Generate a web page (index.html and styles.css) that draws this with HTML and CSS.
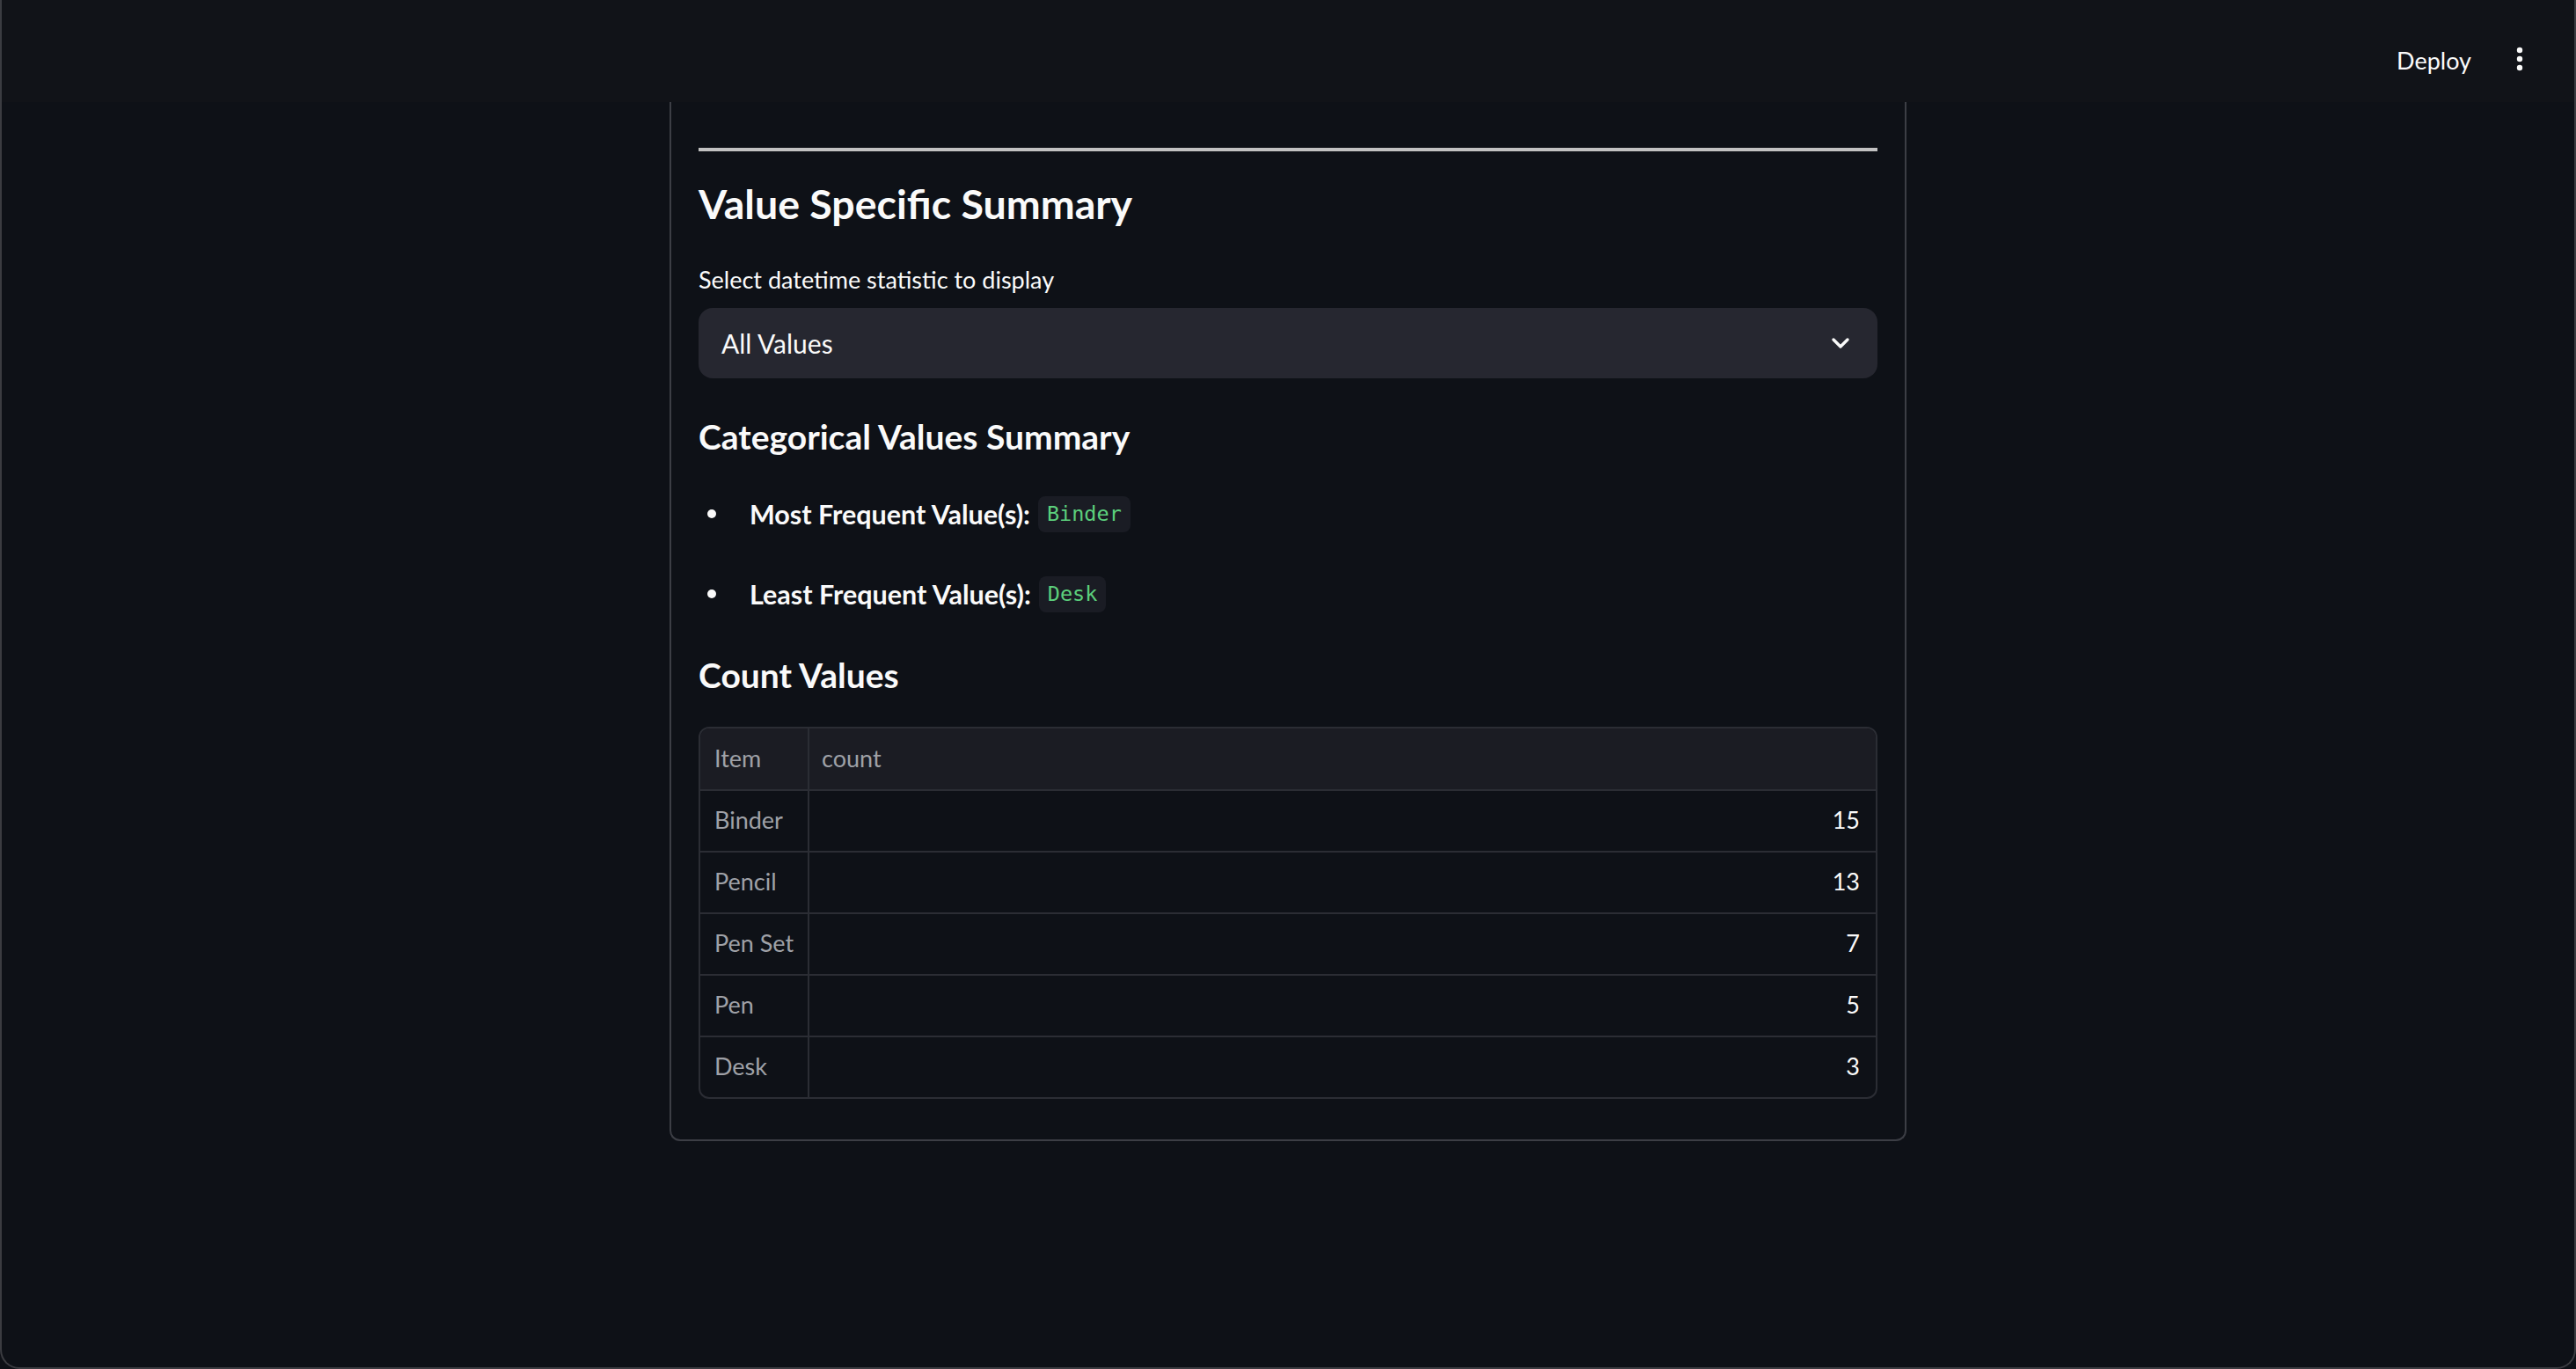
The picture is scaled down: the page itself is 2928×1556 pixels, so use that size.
FILE: index.html
```html
<!DOCTYPE html>
<html lang="en">
<head>
<meta charset="utf-8">
<title>Value Specific Summary</title>
<link rel="stylesheet" href="styles.css">
</head>
<body>
<div class="window">
  <header class="topbar">
    <span class="deploy">Deploy</span>
    <span class="kebab" aria-label="menu">
      <svg width="10" height="30" viewBox="0 0 10 30"><circle cx="5" cy="4" r="3.2" fill="#fafafa"/><circle cx="5" cy="14" r="3.2" fill="#fafafa"/><circle cx="5" cy="24" r="3.2" fill="#fafafa"/></svg>
    </span>
  </header>
  <main class="main">
    <section class="card">
      <div class="rule"></div>
      <h3 class="title">Value Specific Summary</h3>
      <div class="label">Select datetime statistic to display</div>
      <div class="select">
        <span class="select-value">All Values</span>
        <svg class="chevron" width="22" height="14" viewBox="0 0 22 14"><path d="M3 3 L11 11 L19 3" fill="none" stroke="#fafafa" stroke-width="3.4" stroke-linecap="round" stroke-linejoin="round"/></svg>
      </div>
      <h4 class="subtitle sub-cat">Categorical Values Summary</h4>
      <ul class="bullets">
        <li class="bullet"><span class="dot"></span><strong>Most Frequent Value(s):</strong><code class="chip">Binder</code></li>
        <li class="bullet"><span class="dot"></span><strong>Least Frequent Value(s):</strong><code class="chip">Desk</code></li>
      </ul>
      <h4 class="subtitle sub-count">Count Values</h4>
      <div class="table">
        <div class="row head"><div class="cell idx">Item</div><div class="cell val-head">count</div></div>
        <div class="row"><div class="cell idx">Binder</div><div class="cell num">15</div></div>
        <div class="row"><div class="cell idx">Pencil</div><div class="cell num">13</div></div>
        <div class="row"><div class="cell idx">Pen Set</div><div class="cell num">7</div></div>
        <div class="row"><div class="cell idx">Pen</div><div class="cell num">5</div></div>
        <div class="row last"><div class="cell idx">Desk</div><div class="cell num">3</div></div>
      </div>
    </section>
  </main>
</div>
</body>
</html>
```

FILE: styles.css
```css
html, body {
  margin: 0;
  padding: 0;
  background: #0e1117;
}

body {
  font-family: Lato, "Noto Sans", sans-serif;
  color: #fafafa;
}

.window {
  box-sizing: border-box;
  width: 2928px;
  height: 1556px;
  border-left: 2px solid #3b3c41;
  border-right: 2px solid #3b3c41;
  border-bottom: 2px solid #3b3c41;
  border-radius: 0 0 22px 22px;
  overflow: hidden;
  background: #0e1117;
  display: flex;
  flex-direction: column;
}

.topbar {
  box-sizing: border-box;
  height: 116px;
  flex: 0 0 116px;
  background: #111318;
  display: flex;
  align-items: center;
  justify-content: flex-end;
  padding: 22px 57px 0 0;
  gap: 50px;
}

.deploy {
  font-size: 27px;
  color: #fafafa;
  margin-top: -2px;
}

.kebab {
  display: flex;
  margin-top: -2px;
}

.main {
  flex: 1;
  display: flex;
  justify-content: center;
  align-items: flex-start;
}

.card {
  box-sizing: border-box;
  width: 1406px;
  border: 2px solid #3c3e45;
  border-top: none;
  border-radius: 0 0 12px 12px;
  padding: 52px 31px 46px;
  display: flex;
  flex-direction: column;
}

.rule {
  height: 4px;
  background: #c2c2c2;
}

.title {
  margin: 29px 0 0;
  font-size: 46.5px;
  line-height: 60px;
  font-weight: 700;
}

.label {
  margin-top: 39px;
  font-size: 27px;
  line-height: 36px;
}

.select {
  margin-top: 14px;
  height: 80px;
  box-sizing: border-box;
  background: #262730;
  border-radius: 16px;
  display: flex;
  align-items: center;
  justify-content: space-between;
  padding: 0 31px 0 26px;
}

.select-value {
  font-size: 30px;
}

.subtitle {
  margin: 0;
  font-size: 39px;
  line-height: 52px;
  font-weight: 700;
}

.sub-cat { margin-top: 40px; }
.sub-count { margin-top: 42px; }

.bullets {
  list-style: none;
  margin: 38px 0 0;
  padding: 0;
  display: flex;
  flex-direction: column;
  gap: 43px;
}

.bullet {
  height: 48px;
  display: flex;
  align-items: center;
  font-size: 30.5px;
}

.bullet strong {
  font-weight: 700;
}

.dot {
  width: 10px;
  height: 10px;
  border-radius: 50%;
  background: #fafafa;
  margin: 0 38px 0 10px;
}

.chip {
  margin-left: 9px;
  height: 41px;
  box-sizing: border-box;
  display: inline-flex;
  align-items: center;
  padding: 0 10px;
  background: #1a1c24;
  border-radius: 8px;
  font-family: "DejaVu Sans Mono", "Liberation Mono", monospace;
  font-size: 23.5px;
  color: #5cd07c;
}

.table {
  margin-top: 33px;
  border: 2px solid #2b2d34;
  border-radius: 12px;
  overflow: hidden;
  display: flex;
  flex-direction: column;
}

.row {
  display: grid;
  grid-template-columns: 124px 1fr;
  height: 70px;
  box-sizing: border-box;
  border-bottom: 2px solid #2b2d34;
}

.row.head {
  height: 71px;
  background: #1b1c23;
}

.row.last {
  border-bottom: none;
  height: 68px;
}

.cell {
  display: flex;
  align-items: center;
  font-size: 27px;
  color: #9fa1a7;
  padding-bottom: 3px;
  box-sizing: border-box;
}

.cell.idx {
  padding-left: 16px;
  border-right: 2px solid #2b2d34;
}

.cell.val-head {
  padding-left: 14px;
}

.cell.num {
  justify-content: flex-end;
  padding-right: 18px;
  color: #fafafa;
}
```
